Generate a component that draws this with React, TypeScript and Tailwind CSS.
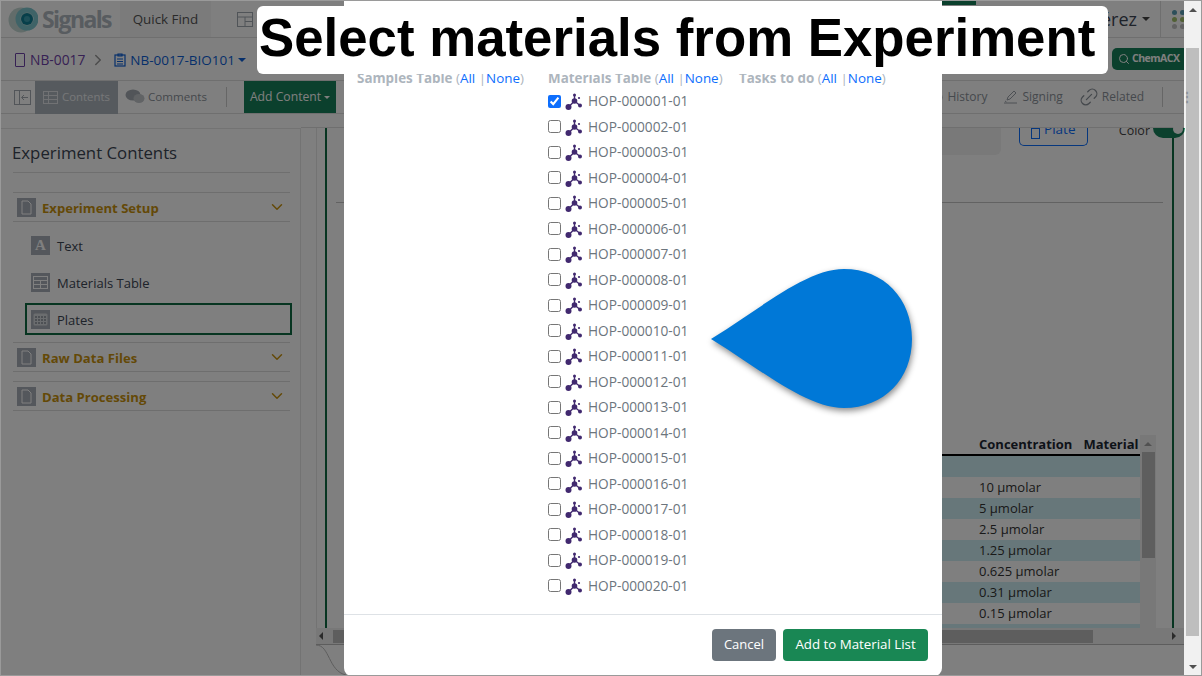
import React from "react";
import { ChevronDown, ChevronRight, Search, Link2 } from "lucide-react";

const materials = Array.from({ length: 20 }, (_, i) => `HOP-${String(i + 1).padStart(6, "0")}-01`);
const concentrations = ["", "10 µmolar", "5 µmolar", "2.5 µmolar", "1.25 µmolar", "0.625 µmolar", "0.31 µmolar", "0.15 µmolar", ""];
const dots = ["#5b9fb5", "#5b9fb5", "#5b9fb5", "#a3c06a", "#a3c06a", "#a3c06a", "#c4c4c4", "#c4c4c4", "#c4c4c4"];

const font = { fontFamily: '"Open Sans", sans-serif' };

function MoleculeIcon() {
  return (
    <svg width="18" height="18" viewBox="0 0 18 18" className="shrink-0">
      <g stroke="#41296f" strokeWidth="1.4">
        <line x1="9.5" y1="8" x2="3.5" y2="14" />
        <line x1="9.5" y1="8" x2="15" y2="12.5" />
        <line x1="9.5" y1="8" x2="9.5" y2="2" />
      </g>
      <circle cx="9.5" cy="8" r="2.8" fill="#41296f" />
      <circle cx="3.5" cy="14" r="3" fill="#41296f" />
      <circle cx="15" cy="12.5" r="2" fill="#41296f" />
      <circle cx="9.5" cy="2" r="1.5" fill="#41296f" />
      <circle cx="14" cy="5" r="1.1" fill="#41296f" />
    </svg>
  );
}

function DocIcon() {
  return (
    <span className="w-[19px] h-[19px] bg-[#a9afb8] flex items-center justify-center shrink-0">
      <svg width="13" height="15" viewBox="0 0 13 15" fill="none" stroke="#fff" strokeWidth="1">
        <path d="M2 1h6l3 3v10H2z" />
      </svg>
    </span>
  );
}

function TableGlyph({ plate }: { plate?: boolean }) {
  return (
    <span className="w-[19px] h-[19px] bg-[#a9afb8] flex items-center justify-center shrink-0">
      {plate ? (
        <svg width="15" height="13" viewBox="0 0 15 13">
          <rect x="0.5" y="0.5" width="14" height="12" rx="1.5" fill="#d7dade" />
          {[3, 6, 9].map((y) =>
            [3, 6, 9, 12].map((x) => <rect key={`${x}-${y}`} x={x - 1} y={y} width="2" height="2" fill="#9aa0a8" />)
          )}
        </svg>
      ) : (
        <svg width="15" height="13" viewBox="0 0 15 13" fill="none" stroke="#fff" strokeWidth="1">
          <rect x="0.5" y="0.5" width="14" height="12" />
          <path d="M0.5 4.5h14M0.5 8.5h14M7.5 4.5v8" />
        </svg>
      )}
    </span>
  );
}

function Section({ label }: { label: string }) {
  return (
    <div className="h-[30px] flex items-center gap-[6px] border-y border-[#dcdcdc] pl-[4px] pr-[4px]">
      <DocIcon />
      <span className="text-[13.1px] font-bold text-[#c9930f] flex-1 mt-[4px]">{label}</span>
      <ChevronDown size={18} className="text-[#c9930f]" />
    </div>
  );
}

function SubItem({ label, icon, active }: { label: string; icon: React.ReactNode; active?: boolean }) {
  return (
    <div className={`h-[32px] flex items-center gap-[7px] ml-[12px] -mr-[2px] pl-[4px] text-[13px] text-[#3c4654] border-2 ${active ? "border-[#0f6b43]" : "border-transparent"}`}>
      {icon}
      <span className="mt-[4px]">{label}</span>
    </div>
  );
}

function SelectHeader({ label }: { label: string }) {
  return (
    <div className="text-[13.4px] leading-[18px] whitespace-nowrap text-[#adb5bd]">
      <span className="font-bold">{label}</span> (<span className="text-[#0d6efd]">All</span> |<span className="text-[#0d6efd]">None</span>)
    </div>
  );
}

function Background() {
  return (
    <div className="flex flex-col h-full bg-white">
      {/* Top nav */}
      <div className="relative h-[37px] shrink-0 flex items-center border-b border-[#dedede] pl-[7px] overflow-hidden">
        <svg width="30" height="30" viewBox="0 0 30 30" className="shrink-0">
          <circle cx="13" cy="16" r="12.5" fill="#c4d8d4" />
          <circle cx="19" cy="15" r="9" fill="none" stroke="#7fc7cf" strokeWidth="5" />
          <circle cx="19" cy="15" r="6" fill="#0e7f95" />
          <circle cx="19" cy="15" r="3" fill="#3b9fb0" />
        </svg>
        <span className="ml-[4px] text-[23px] font-bold tracking-[-1.6px] text-[#b0b8c0]">Signals</span>
        <div className="ml-[9px] w-[91px] h-[37px] flex items-center justify-center bg-[#f7f7f7] text-[13.4px] text-[#555]">Quick Find</div>
        <svg width="16" height="15" viewBox="0 0 16 15" fill="none" stroke="#a0a8b0" strokeWidth="1" className="ml-[26px] shrink-0">
          <rect x="0.5" y="0.5" width="15" height="14" />
          <path d="M0.5 5h15M8 5v9.5M8 9.5h7.5" />
        </svg>
        <div className="flex-1"></div>
        <span className="text-[18px] text-[#3c4654] mr-[5px]">érez</span>
        <span className="w-0 h-0 border-x-[4px] border-x-transparent border-t-[4px] border-t-[#444] mr-[10px]"></span>
        <div className="h-[37px] w-[24px] shrink-0 pl-[11px] border-l border-[#dedede] flex items-center">
          <div className="grid grid-cols-[8px_8px_8px] gap-y-[2px] w-[24px] shrink-0">
            {dots.map((c, i) => (
              <span key={i} className="w-[5px] h-[5px] rounded-full" style={{ background: c }}></span>
            ))}
          </div>
        </div>
        <div className="absolute left-[900px] top-0 w-[75px] h-[4px] bg-[#17805a]"></div>
      </div>

      {/* Breadcrumb */}
      <div className="h-[43px] shrink-0 flex items-center border-b border-[#dedede] pl-[14px] pt-[2px] text-[13.8px]">
        <span className="w-[10px] h-[14px] border border-[#6f42a8] rounded-[1px] mr-[5px]"></span>
        <span className="text-[#6f42a8]">NB-0017</span>
        <ChevronRight size={18} className="text-[#999] ml-[4px] mr-[7px]" />
        <svg width="12" height="14" viewBox="0 0 12 14" fill="none" stroke="#0d5fd6" strokeWidth="1.2" className="mr-[4px]">
          <rect x="1" y="2" width="10" height="11" />
          <path d="M4 1h4v2H4zM3 6h6M3 8.5h6M3 11h6" />
        </svg>
        <span className="text-[#0d5fd6] text-[13.5px]">NB-0017-BIO101</span>
        <span className="ml-[3px] w-0 h-0 border-x-[4px] border-x-transparent border-t-[4px] border-t-[#0d5fd6]"></span>
        <div className="flex-1"></div>
        <div className="h-[22px] w-[72px] -mt-[2px] rounded-l-[5px] bg-[#17805a] flex items-center pl-[6px] gap-[2px] text-white overflow-hidden">
          <Search size={12} className="shrink-0" />
          <span className="text-[10.5px] font-bold tracking-[-0.5px]">ChemACX</span>
        </div>
      </div>

      {/* Toolbar */}
      <div className="h-[33px] shrink-0 flex items-center border-b border-[#dedede] text-[12px] text-[#8b929a]">
        <svg width="17" height="15" viewBox="0 0 17 15" fill="none" stroke="#a5abb2" strokeWidth="1" className="ml-[13px] mr-[4px] shrink-0">
          <rect x="0.5" y="0.5" width="16" height="14" />
          <path d="M5.5 0.5v14M14 7.5H8M10 5L7.5 7.5 10 10" />
        </svg>
        <div className="w-[83px] h-[33px] bg-[#adb5bd] flex items-center pl-[8px] gap-[4px] text-[#eceff1] text-[11.4px]">
          <svg width="15" height="13" viewBox="0 0 15 13" fill="none" stroke="#e2e5e8" strokeWidth="1">
            <rect x="0.5" y="0.5" width="14" height="12" />
            <path d="M0.5 4.5h14M0.5 8.5h14M5.5 0.5v12" />
          </svg>
          <span>Contents</span>
        </div>
        <div className="flex items-center gap-[3px] ml-[7px] text-[11.6px]">
          <svg width="20" height="15" viewBox="0 0 20 15">
            <ellipse cx="8" cy="6" rx="7.5" ry="5.5" fill="#a5abb2" />
            <ellipse cx="14" cy="9.5" rx="5.5" ry="4.5" fill="#c2c6cb" />
          </svg>
          <span>Comments</span>
        </div>
        <div className="h-[20px] border-l border-[#ccc] ml-[19px] mr-[17px]"></div>
        <div className="w-[92px] h-[32px] bg-[#17805a] text-white flex items-center justify-center gap-[3px] text-[12.2px]">
          <span>Add Content</span>
          <span className="w-0 h-0 border-x-[3px] border-x-transparent border-t-[3px] border-t-white"></span>
        </div>
        <div className="flex-1"></div>
        <div className="flex items-center gap-[4px]">
          <svg width="13" height="13" viewBox="0 0 13 13" fill="none" stroke="#9aa0a8" strokeWidth="1">
            <circle cx="6.5" cy="6.5" r="5.5" />
            <path d="M6.5 3.5v3l2 1.5" />
          </svg>
          <span>History</span>
        </div>
        <div className="flex items-center gap-[4px] ml-[17px]">
          <svg width="14" height="14" viewBox="0 0 14 14" fill="none" stroke="#9aa0a8" strokeWidth="1">
            <path d="M3 10l1-3 6-6 2 2-6 6zM0 13h13M1 11l1.5 1" />
          </svg>
          <span>Signing</span>
        </div>
        <div className="flex items-center gap-[2px] ml-[15px]">
          <Link2 size={22} strokeWidth={1.4} className="-rotate-45" />
          <span>Related</span>
        </div>
        <div className="h-[20px] border-l border-[#ccc] ml-[18px] mr-[18px]"></div>
        <span className="w-[3px] font-bold overflow-visible">⋮</span>
      </div>

      <div className="flex-1 min-h-0 flex">
        {/* Sidebar */}
        <div className="w-[300px] shrink-0 border-r border-[#e6e6e6] pt-[12px] pl-[11px] pr-[10px] mt-[14px] border-t">
          <div className="h-[32px] ml-[1px] border-b border-[#dedede] text-[16.8px] leading-[24px] text-[#3c4654] -indent-[1px]">Experiment Contents</div>
          <div className="mt-[19px] ml-[1px]">
            <Section label="Experiment Setup" />
            <div className="pt-[7px] pb-[7px]">
              <SubItem label="Text" icon={<span className="w-[19px] h-[19px] bg-[#a9afb8] text-white flex items-center justify-center text-[15px] font-bold" style={{ fontFamily: '"Liberation Serif", serif' }}>A</span>} />
              <div className="h-[5px]"></div>
              <SubItem label="Materials Table" icon={<TableGlyph />} />
              <div className="h-[5px]"></div>
              <SubItem label="Plates" active icon={<TableGlyph plate />} />
            </div>
            <Section label="Raw Data Files" />
            <div className="h-[9px]"></div>
            <Section label="Data Processing" />
          </div>
        </div>

        {/* Experiment pane */}
        <div className="flex-1 min-w-0 flex flex-col">
          <div className="h-[14px] shrink-0 border-b border-[#dedede]"></div>
          <div className="flex-1 min-h-0 ml-[15px] border-l border-[#e6e6e6] flex flex-col">
            <div className="flex-1 min-h-0 border-x-2 border-[#0f6b43] ml-[8px] mr-[10px] flex flex-col items-end pr-[16px]">
              <div className="w-full flex justify-end items-start h-[27px] shrink-0">
                <div className="w-[100px] h-[27px] bg-[#f2f2f2] rounded-br-[6px] mr-[18px]"></div>
                <div className="w-[69px] h-[18px] border border-t-0 border-[#0d6efd] rounded-b-[5px] flex justify-center items-start gap-[4px] text-[13.5px] text-[#0d6efd] overflow-hidden">
                  <span className="w-[9px] h-[11px] border border-[#0d6efd] shrink-0"></span>
                  <span className="leading-[18px] -mt-[8px]">Plate</span>
                </div>
                <div className="ml-[31px] h-[10px] overflow-hidden shrink-0">
                  <span className="block text-[12.5px] leading-[16px] -mt-[5px] text-[#444]">Color</span>
                </div>
                <div className="w-[32px] h-[10px] bg-[#17805a] rounded-b-full ml-[3px] -mr-[29px] shrink-0 relative">
                  <span className="absolute right-[2px] -top-[4px] w-[10px] h-[10px] rounded-full bg-white"></span>
                </div>
              </div>
              <div className="w-[827px] -mr-[7px] border-b border-[#c4c4c4] mt-[47px] shrink-0"></div>

              <div className="mt-[232px] w-[230px] flex-1 min-h-0 flex overflow-hidden">
                <div className="flex-1 min-w-0 flex flex-col">
                  <div className="h-[21px] shrink-0 flex items-center border-b-2 border-black text-[13px] font-bold text-[#1c2733] whitespace-nowrap pl-[53px] gap-[11px] pt-[1px]">
                    <span>Concentration</span>
                    <span>Material</span>
                  </div>
                  {concentrations.map((c, i) => (
                    <div key={i} className={`h-[21px] shrink-0 flex items-center pl-[53px] text-[13px] text-[#333] ${i % 2 === 0 ? "bg-[#cfeff5]" : "bg-white"}`}>
                      {c}
                    </div>
                  ))}
                </div>
                <div className="w-[16px] shrink-0 bg-[#f1f1f1] flex flex-col items-center pt-[7px]">
                  <div className="w-0 h-0 border-x-[4px] border-x-transparent border-b-[4px] border-b-[#a3a3a3]"></div>
                  <div className="w-[13px] h-[106px] mt-[6px] bg-[#bcbcbc]"></div>
                </div>
              </div>
            </div>
            <div className="h-[16px] shrink-0 bg-[#f1f1f1] flex items-center -ml-[1px]">
              <div className="w-[3px]"></div>
              <div className="w-0 h-0 border-y-[4px] border-y-transparent border-r-[4px] border-r-[#555] mr-[10px]"></div>
              <div className="w-[760px] h-[13px] bg-[#bcbcbc]"></div>
              <div className="flex-1"></div>
              <div className="w-0 h-0 border-y-[4px] border-y-transparent border-l-[4px] border-l-[#555] mr-[8px]"></div>
            </div>
            <div className="relative h-[31px] shrink-0 border-t border-[#bbb] bg-white -ml-[1px]">
              <svg width="30" height="31" viewBox="0 0 30 31" fill="none" stroke="#bbb" className="absolute left-0 top-0">
                <path d="M0 0 C14 0 12 26 30 30" />
              </svg>
            </div>
          </div>
        </div>
      </div>
    </div>
  );
}

export default function App() {
  return (
    <div className="w-[1202px] h-[676px] flex overflow-hidden border border-[#9a9a9a] bg-white" style={font}>
      <div className="relative flex-1 min-w-0">
        <Background />

        {/* Backdrop */}
        <div className="absolute inset-0 bg-black/50"></div>

        {/* Modal */}
        <div className="absolute left-[343px] top-[-1px] w-[598px] h-[676px] bg-white rounded-b-[8px] flex flex-col">
          <div className="flex-1 min-h-0 pt-[69px] pl-[13px] grid grid-cols-[191px_191px_191px] content-start">
            <SelectHeader label="Samples Table" />
            <div>
              <SelectHeader label="Materials Table" />
              <div className="mt-[1.7px]">
                {materials.map((m, i) => (
                  <div key={m} className="h-[25.5px] flex items-center text-[13.7px] text-[#6c757d]">
                    <input type="checkbox" defaultChecked={i === 0} className="w-[13px] h-[13px] shrink-0 accent-[#0d6efd]" />
                    <span className="ml-[4px] mt-[2px]">
                      <MoleculeIcon />
                    </span>
                    <span className="ml-[5px]">{m}</span>
                  </div>
                ))}
              </div>
            </div>
            <SelectHeader label="Tasks to do" />
          </div>
          <div className="h-[62px] shrink-0 border-t border-[#dee2e6] flex items-center justify-end gap-[7px] pr-[14px] pb-[2px]">
            <button className="w-[64px] h-[32px] pt-[1px] rounded-[4px] bg-[#6c757d] text-white text-[13px]">Cancel</button>
            <button className="w-[145px] h-[32px] pt-[1px] rounded-[4px] bg-[#198754] text-white text-[13.3px]">Add to Material List</button>
          </div>
        </div>

        {/* Callout drop */}
        <svg width="210" height="150" viewBox="0 0 210 150" className="absolute left-[709px] top-[266px]" style={{ filter: "drop-shadow(1px 3px 3px rgba(0,0,0,0.45))" }}>
          <path d="M1 72 C 50 42, 96 2, 134 2 C 174 2, 202 32, 202 72 C 202 112, 174 141, 134 141 C 96 141, 50 102, 1 72 Z" fill="#0078d7" />
        </svg>

        {/* Title banner */}
        <div className="absolute left-[256px] top-[5px] w-[851px] h-[68px] bg-white rounded-[6px] flex items-center pl-[2px] pb-[4px] text-[52.8px] leading-none font-bold text-black whitespace-nowrap" style={{ fontFamily: '"Liberation Sans", sans-serif' }}>
          Select materials from Experiment
        </div>
      </div>

      {/* Window scrollbar */}
      <div className="w-[17px] shrink-0 bg-[#f1f1f1] flex flex-col items-center">
        <div className="h-[47px] shrink-0 pt-[7px]">
          <div className="w-0 h-0 border-x-[4px] border-x-transparent border-b-[4px] border-b-[#505050]"></div>
        </div>
        <div className="w-[13px] bg-[#bebebe] shrink-0 flex-1"></div>
        <div className="h-[39px] shrink-0 pt-[29px]">
          <div className="w-0 h-0 border-x-[4px] border-x-transparent border-t-[4px] border-t-[#505050]"></div>
        </div>
      </div>
    </div>
  );
}
